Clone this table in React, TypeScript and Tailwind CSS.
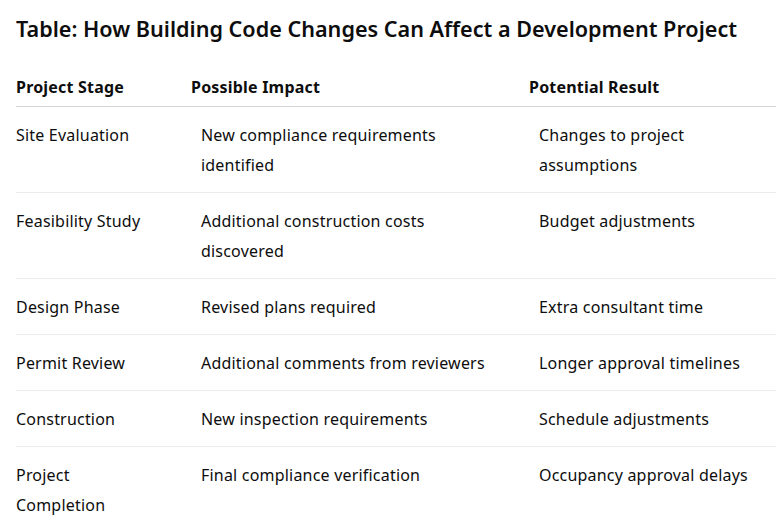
import React from 'react';

type Row = { stage: string[]; impact: string[]; result: string[] };

// Line breaks are given per cell so wrapping matches the original table
const rows: Row[] = [
  { stage: ['Site Evaluation'], impact: ['New compliance requirements', 'identified'], result: ['Changes to project', 'assumptions'] },
  { stage: ['Feasibility Study'], impact: ['Additional construction costs', 'discovered'], result: ['Budget adjustments'] },
  { stage: ['Design Phase'], impact: ['Revised plans required'], result: ['Extra consultant time'] },
  { stage: ['Permit Review'], impact: ['Additional comments from reviewers'], result: ['Longer approval timelines'] },
  { stage: ['Construction'], impact: ['New inspection requirements'], result: ['Schedule adjustments'] },
  { stage: ['Project', 'Completion'], impact: ['Final compliance verification'], result: ['Occupancy approval delays'] },
];

function Lines({ lines }: { lines: string[] }) {
  return (
    <>
      {lines.map((l, i) => (
        <div key={i} className="whitespace-nowrap">{l}</div>
      ))}
    </>
  );
}

export default function App() {
  return (
    <div className="min-h-screen bg-white text-[#0d0d0d] font-['Noto_Sans',sans-serif] overflow-hidden">
      <div className="pl-4 pt-[14px]">
        <h3 className="text-[21.6px] leading-[30px] font-semibold whitespace-nowrap">
          Table: How Building Code Changes Can Affect a Development Project
        </h3>

        <table className="mt-[28px] w-[760px] table-fixed border-collapse text-[16px] leading-[30px] tracking-[0.2px]">
          <colgroup>
            <col className="w-[169px]" />
            <col className="w-[338px]" />
            <col className="w-[253px]" />
          </colgroup>
          <thead>
            <tr className="border-b border-[#d4d4d4]">
              <th className="text-left font-bold pb-[4px] pl-0">Project Stage</th>
              <th className="text-left font-bold pb-[4px] pl-[6px]">Possible Impact</th>
              <th className="text-left font-bold pb-[4px] pl-[6px]">Potential Result</th>
            </tr>
          </thead>
          <tbody>
            {rows.map((r, i) => (
              <tr key={i} className="border-b border-[#ececec] align-top">
                <td className="pt-[13px] pb-[12px] pl-0 font-normal">
                  <Lines lines={r.stage} />
                </td>
                <td className="pt-[13px] pb-[12px] pl-4">
                  <Lines lines={r.impact} />
                </td>
                <td className="pt-[13px] pb-[12px] pl-4">
                  <Lines lines={r.result} />
                </td>
              </tr>
            ))}
          </tbody>
        </table>
      </div>
    </div>
  );
}
